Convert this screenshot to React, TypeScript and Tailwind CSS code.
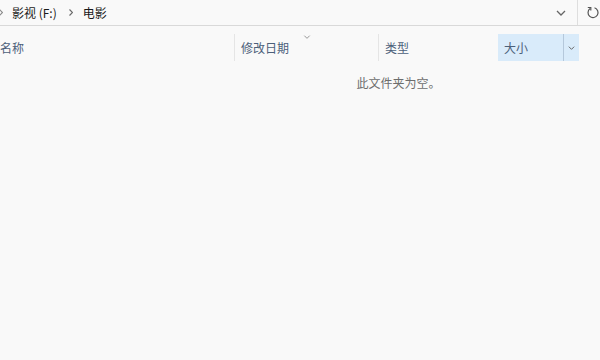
import React from "react";

const font = { fontFamily: '"Noto Sans CJK SC", "Noto Sans", sans-serif' };

function Chevron({ className }: { className?: string }) {
  return (
    <svg viewBox="0 0 10 6" className={className} fill="none" stroke="currentColor" strokeWidth={1.3}>
      <path d="M1 1l4 4 4-4" />
    </svg>
  );
}

function Crumb({ className }: { className?: string }) {
  return (
    <svg viewBox="0 0 4 7" className={className} fill="none" stroke="currentColor" strokeWidth={1.2}>
      <path d="M0.5 0.5l3 3-3 3" />
    </svg>
  );
}

export default function App() {
  return (
    <div className="w-[600px] h-[360px] bg-[#f9f9f9] overflow-hidden text-[12px]" style={font}>
      {/* ADDRESS BAR */}
      <div className="flex h-[26px] border-b border-[#d9d9d9]">
        <div className="flex items-center w-[577px] text-[#1a1a1a]">
          <Crumb className="w-[4px] h-[7px] -ml-[1px] mr-[9px] text-[#8a8a8a]" />
          <span>影视 (F:)</span>
          <Crumb className="w-[4px] h-[7px] ml-[12px] mr-[10px] text-[#6a6a6a]" />
          <span>电影</span>
          <Chevron className="w-[10px] h-[6px] ml-auto mr-[11px] text-[#666]" />
        </div>
        <div className="flex items-center border-l border-[#dedede] pl-[8px]">
          <svg viewBox="0 0 14 14" className="w-[14px] h-[14px] text-[#555]" fill="none" stroke="currentColor" strokeWidth={1.2}>
            <path d="M4 2.6A5 5 0 1 0 8.5 1.8" />
            <path d="M1.8 1.5h3v3" />
          </svg>
        </div>
      </div>

      {/* COLUMN HEADERS */}
      <div className="flex h-[27px] mt-[8px] text-[#4c607a]">
        <div className="w-[235px] flex items-center border-r border-[#e5e5e5]">名称</div>
        <div className="w-[144px] flex items-center pl-[6px] border-r border-[#e5e5e5] relative">
          修改日期
          <Chevron className="absolute left-[68px] top-[1px] w-[8px] h-[4px] text-[#888]" />
        </div>
        <div className="w-[119px] flex items-center pl-[6px]">类型</div>
        <div className="w-[81px] flex bg-[#d9ebfa]">
          <div className="flex-1 flex items-center pl-[6px] border-r border-[#b5c8db]">大小</div>
          <div className="w-[15px] flex items-center justify-center">
            <Chevron className="w-[7px] h-[4px] text-[#555]" />
          </div>
        </div>
      </div>

      {/* EMPTY */}
      <div className="flex justify-center pl-[197px] mt-[13px] text-[#6d6d6d]">此文件夹为空。</div>
    </div>
  );
}
